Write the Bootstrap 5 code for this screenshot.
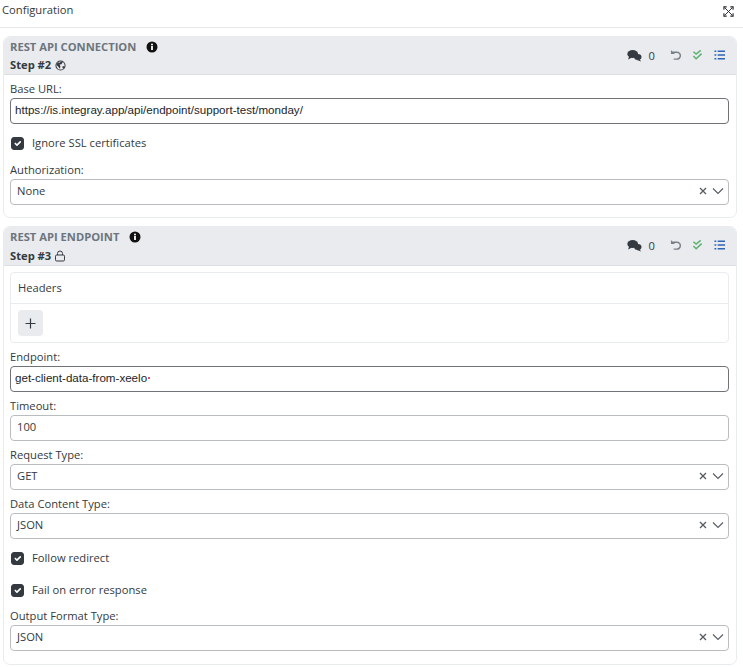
<!DOCTYPE html>
<html lang="en">
<head>
<meta charset="utf-8">
<title>Configuration</title>
<link href="https://cdn.jsdelivr.net/npm/bootstrap@5.3.0/dist/css/bootstrap.min.css" rel="stylesheet">
<style>
html,body{height:667px;overflow:hidden}
body{font-family:"Open Sans","Noto Sans",sans-serif;font-size:11.2px;color:#343a40;background:#fff;line-height:1.4}
.page-head{height:28px;border-bottom:1px solid #e6e8ea;padding:3px 9px 0 2px}
.page-title{font-size:11.2px;line-height:14px;color:#343a40}
.expand-ico{margin-top:3px}
.step-card{margin:8px 6px 8px 3px;border:1px solid #e9ecef;border-radius:7px;overflow:hidden}
.step-head{background:#e9ebee;border-bottom:1px solid #dcdfe3;padding:3px 11px 0 6px;height:38px}
.step-head.tall{height:39px}
.step-name{font-weight:700;font-size:11.2px;line-height:14px;color:#6c757d;gap:7px}
.info-ico{margin-left:3px}
.step-num{font-weight:700;font-size:11.2px;line-height:14px;color:#343a40;margin-top:4px}
.tall .step-num{margin-top:5px}
.num-ico{vertical-align:-2px;margin-left:1px}
.step-body{padding:7px 7px 0 6px}
.step-body.tight-top{padding-top:6px}
.fld-label{display:block;font-size:11.2px;line-height:14px;color:#343a40;margin-bottom:2px}
.fld-box.form-control{height:26px;min-height:26px;padding:0 4px 2px 6px;font-size:11.2px;line-height:22px;border:1px solid #b9bdc1;border-radius:4px;color:#343a40;font-family:inherit}
.fld-box.url-box{border-color:#6f7378;padding-left:4px;font-family:"Liberation Sans",Arial,sans-serif;font-size:11.6px;color:#212529}
.chk-row{display:flex;align-items:center;gap:8px;height:14px;margin:0}
.chk-row .form-check-input{width:13px;height:13px;margin:0 0 0 1px;border-radius:3px;background-color:#343a40;border-color:#343a40;flex:none}
.chk-text{font-size:11.2px;line-height:14px;color:#343a40}
.gap-after-url{margin-top:12px}
.gap-after-chk{margin-top:13px}
.gap-chk-chk{margin-top:18px}
.gap-chk-label{margin-top:12px}
.mt-f{margin-top:7px}
.mt-first{margin-top:7px}
.card-end{height:12px}
.card-end.last-end{height:13px}
.hdr-panel{border:1px solid #e9ecef;border-radius:4px;height:71px;overflow:hidden}
.hdr-title{height:31px;border-bottom:1px solid #e9ecef;padding:8px 7px;font-size:11.2px;line-height:14px}
.plus-btn.btn{width:25px;height:26px;padding:0;background:#e9ebee;border:0;border-radius:4px;margin:6px 0 0 7px;display:flex;align-items:center;justify-content:center}
.req-dot{display:inline-block;width:2px;height:2px;background:#e0103a;margin-left:1px;vertical-align:3px}
.tool-group{gap:11px;margin-top:9px}
.count-txt{font-size:11.2px;line-height:13px;margin-left:7px;margin-right:4px;color:#343a40}
.sel-icons{gap:5px;color:#6c757d}
</style>
</head>
<body>
<div class="page-head d-flex justify-content-between">
  <span class="page-title">Configuration</span>
  <svg class="expand-ico" width="11" height="11" viewBox="0 0 12 12" fill="none" stroke="#212529" stroke-width="1"><path d="M1 4V1h3M8 1h3v3M11 8v3H8M4 11H1V8" stroke-width="1.200"/><path d="M2 2l8 8M10 2l-8 8"/></svg>
</div>

<div class="step-card">
  <div class="step-head d-flex justify-content-between">
    <div>
      <div class="step-name d-flex align-items-center">REST API CONNECTION <svg class="info-ico" width="12" height="12" viewBox="0 0 12 12"><circle cx="6" cy="6" r="5.500" fill="#111"/><rect x="5.100" y="5" width="1.800" height="4" fill="#fff"/><circle cx="6" cy="3.400" r="1" fill="#fff"/></svg></div>
      <div class="step-num">Step #2 <svg class="num-ico" width="11" height="11" viewBox="0 0 12 12"><circle cx="6" cy="6" r="5" fill="none" stroke="#343a40" stroke-width="1.100"/><path d="M3 2.500l2 .5 1.500-1.500 2 1-1.500 2-2 .5 1 2-1 2.500-1.500-2.500-2-1.500zM8.500 6.500l2 .5-1.500 2.500-1-1z" fill="#343a40"/></svg></div>
    </div>
    <div class="d-flex align-items-start tool-group">
      <div class="d-flex align-items-center"><svg width="15" height="13" viewBox="0 0 15 13" fill="#343a40"><ellipse cx="5.700" cy="5" rx="5.400" ry="4"/><path d="M2 7.500L1.200 10.500 5 8.500z"/><ellipse cx="10.800" cy="8" rx="3.700" ry="3"/><path d="M12.500 10l1.500 2.500-4-1.500z"/></svg><span class="count-txt">0</span></div>
      <svg width="11" height="12" viewBox="0 0 12 12" fill="none" stroke="#7a8087" stroke-width="1.600"><path d="M3 3h4.500a3.500 3.500 0 0 1 0 7.500H4"/><path d="M1 .5v4.500H5.500z" fill="#7a8087" stroke="none"/></svg>
      <svg width="11" height="12" viewBox="0 0 12 12" fill="none" stroke="#5cb16f" stroke-width="1.600"><path d="M1.500 2.500l3 2.500 5-4M1.500 7l3 3 6-5.500"/></svg>
      <svg width="11" height="12" viewBox="0 0 12 12" fill="none" stroke="#2d66b5" stroke-width="1.600"><path d="M4 2h8M4 6h8M4 10h8M.5 2H2.500M.5 6H2.500M.5 10H2.500"/></svg>
    </div>
  </div>
  <div class="step-body">
    <label class="fld-label">Base URL:</label>
    <div class="form-control fld-box url-box">https://is.integray.app/api/endpoint/support-test/monday/</div>
    <div class="chk-row gap-after-url"><input class="form-check-input" type="checkbox" checked><span class="chk-text">Ignore SSL certificates</span></div>
    <label class="fld-label gap-after-chk">Authorization:</label>
    <div class="form-control fld-box d-flex justify-content-between align-items-center"><span>None</span>
      <span class="d-flex align-items-center sel-icons"><svg width="8" height="8" viewBox="0 0 8 8" stroke="#555b61" stroke-width="1.300"><path d="M1 1l6 6M7 1l-6 6"/></svg><svg width="12" height="8" viewBox="0 0 12 8" fill="none" stroke="#555b61" stroke-width="1.100"><path d="M1 1.500l5 5 5-5"/></svg></span></div>
    <div class="card-end"></div>
  </div>
</div>

<div class="step-card">
  <div class="step-head tall d-flex justify-content-between">
    <div>
      <div class="step-name d-flex align-items-center">REST API ENDPOINT <svg class="info-ico" width="12" height="12" viewBox="0 0 12 12"><circle cx="6" cy="6" r="5.500" fill="#111"/><rect x="5.100" y="5" width="1.800" height="4" fill="#fff"/><circle cx="6" cy="3.400" r="1" fill="#fff"/></svg></div>
      <div class="step-num">Step #3 <svg class="num-ico" width="10" height="12" viewBox="0 0 10 12" fill="none" stroke="#343a40"><rect x=".5" y="5" width="9" height="6" rx="1.200"/><path d="M2.500 5V3.500a2.500 2.500 0 0 1 5 0V5"/></svg></div>
    </div>
    <div class="d-flex align-items-start tool-group">
      <div class="d-flex align-items-center"><svg width="15" height="13" viewBox="0 0 15 13" fill="#343a40"><ellipse cx="5.700" cy="5" rx="5.400" ry="4"/><path d="M2 7.500L1.200 10.500 5 8.500z"/><ellipse cx="10.800" cy="8" rx="3.700" ry="3"/><path d="M12.500 10l1.500 2.500-4-1.500z"/></svg><span class="count-txt">0</span></div>
      <svg width="11" height="12" viewBox="0 0 12 12" fill="none" stroke="#7a8087" stroke-width="1.600"><path d="M3 3h4.500a3.500 3.500 0 0 1 0 7.500H4"/><path d="M1 .5v4.500H5.500z" fill="#7a8087" stroke="none"/></svg>
      <svg width="11" height="12" viewBox="0 0 12 12" fill="none" stroke="#5cb16f" stroke-width="1.600"><path d="M1.500 2.500l3 2.500 5-4M1.500 7l3 3 6-5.500"/></svg>
      <svg width="11" height="12" viewBox="0 0 12 12" fill="none" stroke="#2d66b5" stroke-width="1.600"><path d="M4 2h8M4 6h8M4 10h8M.5 2H2.500M.5 6H2.500M.5 10H2.500"/></svg>
    </div>
  </div>
  <div class="step-body tight-top">
    <div class="hdr-panel">
      <div class="hdr-title">Headers</div>
      <button class="btn plus-btn" type="button"><svg width="11" height="11" viewBox="0 0 11 11" stroke="#343a40" stroke-width="1.200"><path d="M5.500 .5v10M.5 5.500h10"/></svg></button>
    </div>
    <label class="fld-label mt-first">Endpoint:</label>
    <div class="form-control fld-box url-box">get-client-data-from-xeelo<span class="req-dot rounded-circle"></span></div>
    <label class="fld-label mt-f">Timeout:</label>
    <div class="form-control fld-box">100</div>
    <label class="fld-label mt-f">Request Type:</label>
    <div class="form-control fld-box d-flex justify-content-between align-items-center"><span>GET</span>
      <span class="d-flex align-items-center sel-icons"><svg width="8" height="8" viewBox="0 0 8 8" stroke="#555b61" stroke-width="1.300"><path d="M1 1l6 6M7 1l-6 6"/></svg><svg width="12" height="8" viewBox="0 0 12 8" fill="none" stroke="#555b61" stroke-width="1.100"><path d="M1 1.500l5 5 5-5"/></svg></span></div>
    <label class="fld-label mt-f">Data Content Type:</label>
    <div class="form-control fld-box d-flex justify-content-between align-items-center"><span>JSON</span>
      <span class="d-flex align-items-center sel-icons"><svg width="8" height="8" viewBox="0 0 8 8" stroke="#555b61" stroke-width="1.300"><path d="M1 1l6 6M7 1l-6 6"/></svg><svg width="12" height="8" viewBox="0 0 12 8" fill="none" stroke="#555b61" stroke-width="1.100"><path d="M1 1.500l5 5 5-5"/></svg></span></div>
    <div class="chk-row gap-after-url"><input class="form-check-input" type="checkbox" checked><span class="chk-text">Follow redirect</span></div>
    <div class="chk-row gap-chk-chk"><input class="form-check-input" type="checkbox" checked><span class="chk-text">Fail on error response</span></div>
    <label class="fld-label gap-chk-label">Output Format Type:</label>
    <div class="form-control fld-box d-flex justify-content-between align-items-center"><span>JSON</span>
      <span class="d-flex align-items-center sel-icons"><svg width="8" height="8" viewBox="0 0 8 8" stroke="#555b61" stroke-width="1.300"><path d="M1 1l6 6M7 1l-6 6"/></svg><svg width="12" height="8" viewBox="0 0 12 8" fill="none" stroke="#555b61" stroke-width="1.100"><path d="M1 1.500l5 5 5-5"/></svg></span></div>
    <div class="card-end last-end"></div>
  </div>
</div>
<script src="https://cdn.jsdelivr.net/npm/bootstrap@5.3.0/dist/js/bootstrap.bundle.min.js"></script>
</body>
</html>
